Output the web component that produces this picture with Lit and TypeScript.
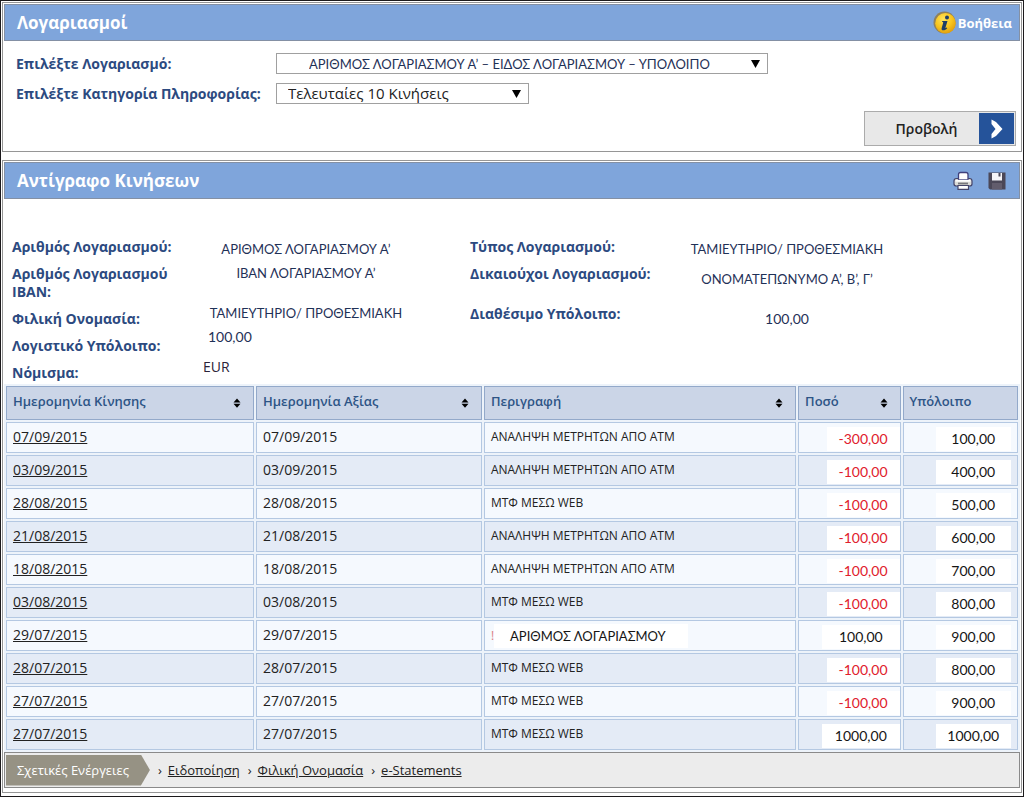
import { LitElement, html, css, svg, nothing } from "lit";
import { customElement } from "lit/decorators.js";
import { classMap } from "lit/directives/class-map.js";

interface Movement {
  date: string;
  text: string;
  amount: string;
  balance: string;
  transfer?: boolean;
}

const ATM = "ΑΝΑΛΗΨΗ ΜΕΤΡΗΤΩΝ ΑΠΟ ΑΤΜ";
const WEB = "ΜΤΦ ΜΕΣΩ WEB";

const MOVEMENTS: Movement[] = [
  { date: "07/09/2015", text: ATM, amount: "-300,00", balance: "100,00" },
  { date: "03/09/2015", text: ATM, amount: "-100,00", balance: "400,00" },
  { date: "28/08/2015", text: WEB, amount: "-100,00", balance: "500,00" },
  { date: "21/08/2015", text: ATM, amount: "-100,00", balance: "600,00" },
  { date: "18/08/2015", text: ATM, amount: "-100,00", balance: "700,00" },
  { date: "03/08/2015", text: WEB, amount: "-100,00", balance: "800,00" },
  { date: "29/07/2015", text: "ΑΡΙΘΜΟΣ ΛΟΓΑΡΙΑΣΜΟΥ", amount: "100,00", balance: "900,00", transfer: true },
  { date: "28/07/2015", text: WEB, amount: "-100,00", balance: "800,00" },
  { date: "27/07/2015", text: WEB, amount: "-100,00", balance: "900,00" },
  { date: "27/07/2015", text: WEB, amount: "1000,00", balance: "1000,00" },
];

const COLUMNS = [
  { title: "Ημερομηνία Κίνησης", sortable: true },
  { title: "Ημερομηνία Αξίας", sortable: true },
  { title: "Περιγραφή", sortable: true },
  { title: "Ποσό", sortable: true },
  { title: "Υπόλοιπο", sortable: false },
];

const caret = html`<svg class="caret" width="9" height="8" viewBox="0 0 9 8" aria-hidden="true">
  <path d="M0 0h9L4.500 8z" fill="#000" />
</svg>`;

const sortMark = html`<svg width="8" height="10" viewBox="0 0 8 10" aria-hidden="true">
  ${svg`<path d="M4 0.500L7.500 4.400H0.500zM0.500 5.800H7.500L4 9.700z" fill="#000" />`}
</svg>`;

const infoIcon = html`<svg width="24" height="24" viewBox="0 0 24 24" aria-hidden="true">
  <defs>
    <radialGradient id="gold" cx="0.4" cy="0.3" r="0.7">
      <stop offset="0" stop-color="#ffe45c" />
      <stop offset="0.6" stop-color="#f8c41c" />
      <stop offset="1" stop-color="#e0a010" />
    </radialGradient>
  </defs>
  <circle cx="11.500" cy="11.500" r="11" fill="#8f815c" />
  <circle cx="12.500" cy="12.300" r="10.300" fill="url(#gold)" />
  <circle cx="14" cy="6.500" r="2" fill="#1f3d66" />
  <path d="M9.300 10h5.200l-2 6.400c-.2.8.4.9 1.400.2l.3.700c-1.300 1.500-2.600 2.100-4 2-1.400-.1-1.900-1-1.500-2.400l1.500-5.200c.1-.5-.2-.7-1.100-.7z" fill="#1f3d66" />
</svg>`;

const printIcon = html`<svg width="20" height="20" viewBox="0 0 20 20" aria-hidden="true">
  <path d="M3.500 7.500h13q2.500 0 2.500 2.500v3q0 2-2.500 2h-13q-2.500 0-2.500-2v-3q0-2.500 2.500-2.500z" fill="#dcdcd8" stroke="#45456a" stroke-width="1.200" />
  <path d="M5.500 9V3.500q0-2 2-2h5.500q2 0 2 2V9z" fill="#fff" stroke="#40407c" stroke-width="1.300" />
  <path d="M2.500 9.800h15" stroke="#fff" stroke-width="1.800" />
  <path d="M5 12.500h10" stroke="#77777c" stroke-width="1.800" />
  <path d="M5 14.500h10.500v3.800h-10.500z" fill="#fff" stroke="#45456a" stroke-width="1.200" />
</svg>`;

const saveIcon = html`<svg width="18" height="18" viewBox="0 0 18 18" aria-hidden="true">
  <path d="M0.500 0.500h17v17H2l-1.500-1.500z" fill="#4b4757" />
  <path d="M4 1h10v7.500H4z" fill="#f4f4f8" />
  <path d="M10.500 1h2v3.500h-2z" fill="#4b4757" />
  <path d="M4 11h10v6.500H4z" fill="#625c6c" />
</svg>`;

@customElement("app-root")
export class AppRoot extends LitElement {
  static styles = css`
    :host {
      display: block;
      box-sizing: border-box;
      min-height: 100vh;
      padding: 1px;
      border: 1px solid #1c1a1c;
      background: #fff;
      color: #222;
      font: 13px/18px "Open Sans", "Noto Sans", sans-serif;
    }
    * { box-sizing: border-box; }
    h1, h2 { margin: 0; font-size: 17px; line-height: 24px; font-weight: 700; }
    a { color: inherit; }
    svg { display: block; flex: none; }

    .panel { border: 1px solid #969696; padding: 1px; }
    .statement { margin-top: 8px; }
    .bar {
      display: flex;
      align-items: center;
      justify-content: space-between;
      height: 37px;
      padding: 0 7px 0 12px;
      border: 1px solid #8490a4;
      background: #7fa5db;
      color: #fff;
    }
    .help {
      display: flex;
      align-items: center;
      gap: 1px;
      font-size: 13px;
      font-weight: 700;
      text-decoration: none;
    }
    .tools { display: flex; gap: 15px; align-items: center; padding-right: 6px; }
    .tool { padding: 0; border: 0; background: none; }

    .chooser { padding: 12px 4px 4px 12px; }
    .field { display: flex; align-items: center; height: 21px; margin-bottom: 9px; }
    .field label { width: 260px; font-size: 14px; font-weight: 700; color: #2c4a80; }
    .picker { display: grid; align-items: center; height: 21px; }
    .wide { width: 492px; }
    .narrow { width: 253px; }
    select, .caret { grid-area: 1 / 1; }
    .caret { justify-self: end; margin-right: 8px; pointer-events: none; }
    select {
      appearance: none;
      width: 100%;
      height: 21px;
      margin: 0;
      border: 1px solid #a0a0a0;
      border-radius: 0;
      background: #fff;
    }
    .wide select { padding: 0 32px; color: #1f3157; font: 13px/18px Lato, sans-serif; }
    .narrow select { padding: 0 11px; color: #222; font: 15px/19px "Open Sans", sans-serif; }
    .actions { display: flex; justify-content: flex-end; margin-top: -2px; }
    .go {
      display: flex;
      align-items: center;
      width: 152px;
      height: 35px;
      padding: 1px;
      border: 1px solid #ababab;
      background: #e8e8e8;
      color: #222;
      font: 600 14px/18px "Open Sans", sans-serif;
    }
    .go-text { flex: 1; padding-left: 8px; text-align: center; }
    .go-arrow { display: grid; place-items: center; width: 35px; height: 31px; background: #25539a; }

    .details {
      display: grid;
      grid-template-columns: 191px 267px 214px minmax(0, 1fr);
      padding: 38px 0 2px 8px;
    }
    .labels { padding-top: 1px; color: #2c4a80; font-size: 14px; font-weight: 700; }
    .labels div { width: 190px; margin-bottom: 9px; }
    .labels div:last-child { margin-bottom: 0; }
    .labels .spaced { margin-bottom: 22px; }
    .values { color: #1f3157; font: 13px/24px Lato, sans-serif; }
    .values div { width: 206px; text-align: center; white-space: nowrap; }
    .values .number { font-size: 14px; }
    .values .left { text-align: left; padding-left: 5px; }
    .values .plain { text-align: left; font: 14px/24px "Open Sans", sans-serif; color: #2b2238; }
    .gap-s { margin-top: 6px; }
    .gap-l { margin-top: 16px; }

    table {
      width: 100%;
      border-collapse: separate;
      border-spacing: 2px;
      table-layout: fixed;
      background: #edf3fa;
    }
    .c1 { width: 24.7%; }
    .c2 { width: 22.5%; }
    .c3 { width: 31.1%; }
    .c4 { width: 10.2%; }
    th, td { padding: 0 6px; text-align: left; white-space: nowrap; }
    th {
      height: 34px;
      border: 1px solid #93a9ca;
      background: #cbd5e7;
      color: #2d5486;
      font-size: 13px;
      font-weight: 600;
    }
    .head { display: flex; align-items: center; justify-content: space-between; padding-right: 6px; }
    .head span { padding-bottom: 4px; }
    td { height: 31px; padding-bottom: 2px; border: 1px solid #b4c8e2; background: #f5f9fe; font-size: 12px; }
    td.date { font-size: 14px; }
    .even td { background: #e4ebf6; }
    td.money { padding: 2px 0 0; }
    td.covered { padding-bottom: 0; }
    .sum {
      display: block;
      height: 24px;
      background: #fff;
      color: #151515;
      font: 14px/24px Lato, sans-serif;
    }
    .credit { margin-left: 23px; text-align: center; }
    .debit { margin-left: 28px; padding-right: 12px; color: #e0202c; text-align: right; }
    .balance { margin: 0 6px 0 32px; text-align: center; }
    .note { display: flex; align-items: center; }
    .mark { color: #e08080; }
    .cover {
      width: 194px;
      height: 24px;
      padding-left: 16px;
      background: #fff;
      color: #151515;
      font: 13px/24px Lato, sans-serif;
    }

    .related {
      display: flex;
      align-items: center;
      gap: 8px;
      height: 36px;
      margin-bottom: 3px;
      padding: 1px;
      border: 1px solid #8a8a8a;
      background: #ececec;
    }
    .tag {
      height: 31px;
      padding: 0 21px 0 11px;
      background: #969284;
      clip-path: polygon(0 0, calc(100% - 9px) 0, 100% 50%, calc(100% - 9px) 100%, 0 100%);
      color: #fff;
      font-size: 13px;
      line-height: 31px;
    }
    .crumb { display: flex; align-items: center; gap: 6px; }
  `;

  private renderRow(m: Movement, i: number) {
    const debit = m.amount.startsWith("-");
    return html`<tr class=${classMap({ even: i % 2 === 1 })}>
      <td class="date"><a href="#">${m.date}</a></td>
      <td class="date">${m.date}</td>
      <td class=${classMap({ covered: !!m.transfer })}>
        ${m.transfer
          ? html`<div class="note"><span class="mark">!</span><span class="cover">${m.text}</span></div>`
          : m.text}
      </td>
      <td class="money">
        <span class=${classMap({ sum: true, debit, credit: !debit })}>${m.amount}</span>
      </td>
      <td class="money"><span class="sum balance">${m.balance}</span></td>
    </tr>`;
  }

  render() {
    return html`
      <section class="panel">
        <header class="bar">
          <h1>Λογαριασμοί</h1>
          <a class="help" href="#">${infoIcon}<span>Βοήθεια</span></a>
        </header>
        <form class="chooser">
          <div class="field">
            <label for="account">Επιλέξτε Λογαριασμό:</label>
            <div class="picker wide">
              <select id="account">
                <option>ΑΡΙΘΜΟΣ ΛΟΓΑΡΙΑΣΜΟΥ Α’ – ΕΙΔΟΣ ΛΟΓΑΡΙΑΣΜΟΥ – ΥΠΟΛΟΙΠΟ</option>
              </select>
              ${caret}
            </div>
          </div>
          <div class="field">
            <label for="kind">Επιλέξτε Κατηγορία Πληροφορίας:</label>
            <div class="picker narrow">
              <select id="kind">
                <option>Τελευταίες 10 Κινήσεις</option>
              </select>
              ${caret}
            </div>
          </div>
          <div class="actions">
            <button class="go" type="button">
              <span class="go-text">Προβολή</span>
              <span class="go-arrow">
                <svg width="12" height="20" viewBox="0 0 12 20" aria-hidden="true">
                  <path d="M0.500 0.500L5 3l6.500 7L5 17l-4.500 2.500V15l4-5-4-5z" fill="#fff" />
                </svg>
              </span>
            </button>
          </div>
        </form>
      </section>

      <section class="panel statement">
        <header class="bar">
          <h2>Αντίγραφο Κινήσεων</h2>
          <div class="tools">
            <button class="tool" type="button" aria-label="Εκτύπωση">${printIcon}</button>
            <button class="tool" type="button" aria-label="Αποθήκευση">${saveIcon}</button>
          </div>
        </header>

        <div class="details">
          <div class="labels">
            <div>Αριθμός Λογαριασμού:</div>
            <div>Αριθμός Λογαριασμού IBAN:</div>
            <div>Φιλική Ονομασία:</div>
            <div>Λογιστικό Υπόλοιπο:</div>
            <div>Νόμισμα:</div>
          </div>
          <div class="values">
            <div>ΑΡΙΘΜΟΣ ΛΟΓΑΡΙΑΣΜΟΥ Α’</div>
            <div>ΙΒΑΝ ΛΟΓΑΡΙΑΣΜΟΥ Α’</div>
            <div class="gap-l">ΤΑΜΙΕΥΤΗΡΙΟ/ ΠΡΟΘΕΣΜΙΑΚΗ</div>
            <div class="number left">100,00</div>
            <div class="plain gap-s">EUR</div>
          </div>
          <div class="labels">
            <div>Τύπος Λογαριασμού:</div>
            <div class="spaced">Δικαιούχοι Λογαριασμού:</div>
            <div>Διαθέσιμο Υπόλοιπο:</div>
          </div>
          <div class="values">
            <div>ΤΑΜΙΕΥΤΗΡΙΟ/ ΠΡΟΘΕΣΜΙΑΚΗ</div>
            <div class="gap-s">ΟΝΟΜΑΤΕΠΩΝΥΜΟ Α’, Β’, Γ’</div>
            <div class="number gap-l">100,00</div>
          </div>
        </div>

        <table>
          <colgroup>
            <col class="c1" /><col class="c2" /><col class="c3" /><col class="c4" /><col />
          </colgroup>
          <thead>
            <tr>
              ${COLUMNS.map(
                (c) => html`<th scope="col">
                  <div class="head"><span>${c.title}</span>${c.sortable ? sortMark : nothing}</div>
                </th>`
              )}
            </tr>
          </thead>
          <tbody>
            ${MOVEMENTS.map((m, i) => this.renderRow(m, i))}
          </tbody>
        </table>

        <nav class="related">
          <span class="tag">Σχετικές Ενέργειες</span>
          ${["Ειδοποίηση", "Φιλική Ονομασία", "e-Statements"].map(
            (t) => html`<span class="crumb"><span>›</span><a href="#">${t}</a></span>`
          )}
        </nav>
      </section>
    `;
  }
}
